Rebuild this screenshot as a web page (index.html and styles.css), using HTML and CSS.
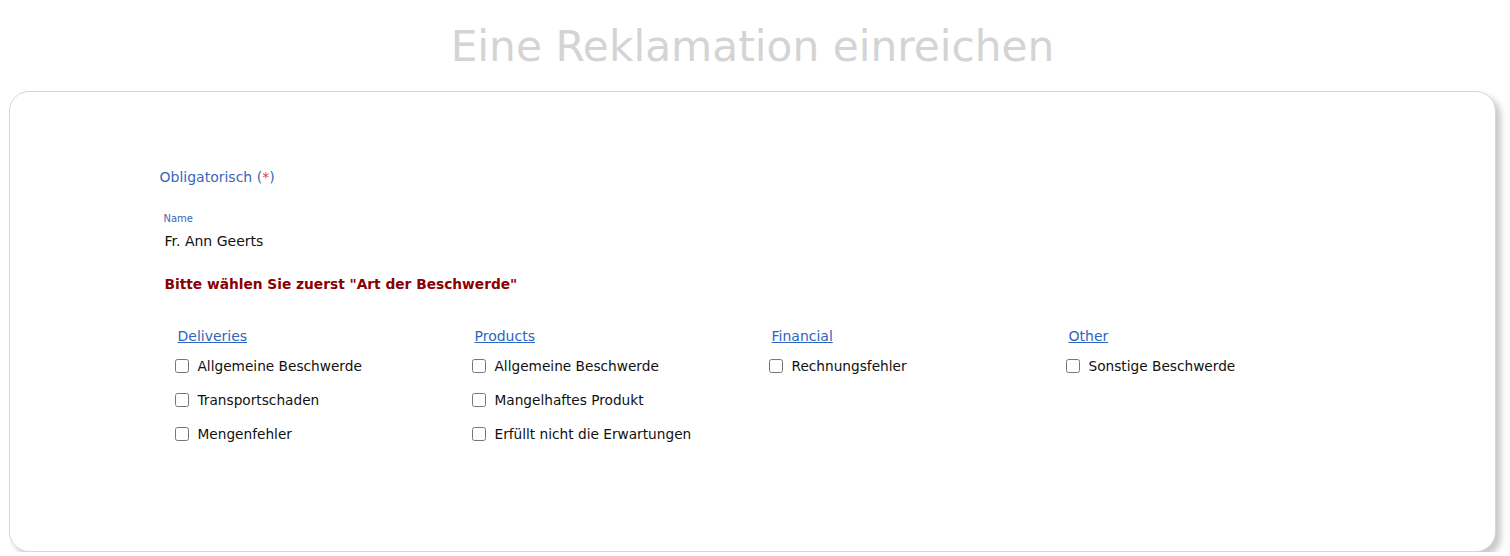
FILE: index.html
```html
<!DOCTYPE html>
<html lang="de">
<head>
<meta charset="utf-8">
<title>Eine Reklamation einreichen</title>
<link rel="stylesheet" href="styles.css">
</head>
<body>
<h1 class="title">Eine Reklamation einreichen</h1>
<div class="card">
  <div class="form">
    <div class="mandatory">Obligatorisch (<span class="star">*</span>)</div>
    <div class="field-label">Name</div>
    <div class="field-value">Fr. Ann Geerts</div>
    <div class="warning">Bitte wählen Sie zuerst "Art der Beschwerde"</div>
    <div class="groups">
      <div class="group">
        <a class="group-title" href="#">Deliveries</a>
        <label class="opt"><input type="checkbox"><span>Allgemeine Beschwerde</span></label>
        <label class="opt"><input type="checkbox"><span>Transportschaden</span></label>
        <label class="opt"><input type="checkbox"><span>Mengenfehler</span></label>
      </div>
      <div class="group">
        <a class="group-title" href="#">Products</a>
        <label class="opt"><input type="checkbox"><span>Allgemeine Beschwerde</span></label>
        <label class="opt"><input type="checkbox"><span>Mangelhaftes Produkt</span></label>
        <label class="opt"><input type="checkbox"><span>Erfüllt nicht die Erwartungen</span></label>
      </div>
      <div class="group">
        <a class="group-title" href="#">Financial</a>
        <label class="opt"><input type="checkbox"><span>Rechnungsfehler</span></label>
      </div>
      <div class="group">
        <a class="group-title" href="#">Other</a>
        <label class="opt"><input type="checkbox"><span>Sonstige Beschwerde</span></label>
      </div>
    </div>
  </div>
</div>
</body>
</html>
```
FILE: styles.css
```css
* { box-sizing: border-box; }
html, body { margin: 0; padding: 0; background: #fff; }
body {
  font-family: "DejaVu Sans", Verdana, sans-serif;
  font-size: 14px;
  color: #111;
  padding: 0 14px 0 9px;
}
.title {
  margin: 21px 0 18px;
  font-weight: normal;
  font-size: 42.3px;
  line-height: 52px;
  text-align: center;
  color: #d4d4d4;
}
.card {
  height: 461px;
  border: 1px solid #d6d6d6;
  border-radius: 20px;
  background: #fff;
  box-shadow: 5px 5px 6px #c9c9c9;
  padding-top: 75px;
}
.form {
  width: 1188px;
  margin: 0 auto;
}
.mandatory {
  padding-left: 1px;
  line-height: 20px;
  color: #3a66bd;
}
.star { color: #f03a1a; }
.field-label {
  margin-top: 26px;
  padding-left: 5px;
  font-size: 10px;
  line-height: 12px;
  color: #3a66bd;
}
.field-value {
  margin-top: 6px;
  padding-left: 6px;
  line-height: 20px;
}
.warning {
  margin-top: 23px;
  padding-left: 6px;
  font-size: 13.75px;
  line-height: 20px;
  font-weight: bold;
  color: #8b0000;
}
.groups {
  margin-top: 32px;
  display: grid;
  grid-template-columns: repeat(4, 297px);
  padding-left: 12px;
}
.group {
  display: flex;
  flex-direction: column;
  align-items: flex-start;
}
.group-title {
  line-height: 20px;
  padding-left: 7px;
  margin-bottom: 3px;
  color: #2d66c0;
  text-decoration: underline;
}
.opt {
  display: flex;
  align-items: center;
  height: 34px;
  font-size: 13.7px;
}
.opt input {
  width: 14px;
  height: 14px;
  margin: 0 9px 0 4px;
}
```
